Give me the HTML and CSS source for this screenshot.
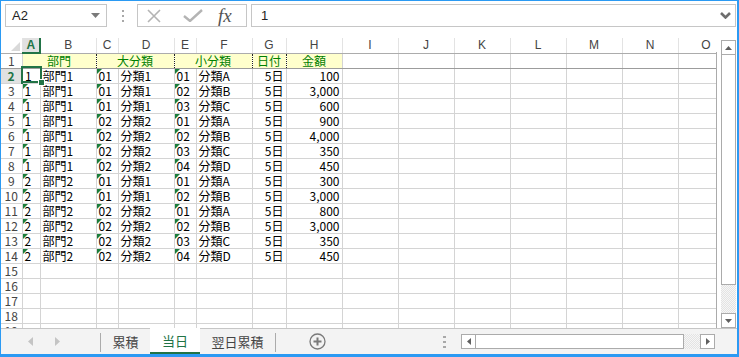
FILE: index.html
```html
<!DOCTYPE html>
<html lang="ja">

<head>
    <meta charset="UTF-8">
    <title>当日</title>
    <link rel="stylesheet" href="styles.css">
</head>

<body>
    <div class="window">
        <div class="formula-bar">
            <div class="name-box">
                <span>A2</span>
                <svg class="caret" width="9" height="5" viewBox="0 0 9 5"><path d="M0 0H9L4.5 5Z" fill="#7a7a7a"/></svg>
            </div>
            <div class="grip">
                <svg width="2" height="12" viewBox="0 0 2 12"><rect y="0" width="2" height="2" fill="#a8a8a8"/><rect y="5" width="2" height="2" fill="#a8a8a8"/><rect y="10" width="2" height="2" fill="#a8a8a8"/></svg>
            </div>
            <div class="fx-buttons">
                <svg class="cancel" width="14" height="14" viewBox="0 0 14 14"><path d="M1 1L13 13M13 1L1 13" stroke="#b4b4b4" stroke-width="1.6" fill="none"/></svg>
                <svg class="enter" width="20" height="13" viewBox="0 0 20 13"><path d="M1 7L7 12L19 1" stroke="#b4b4b4" stroke-width="2.4" fill="none"/></svg>
                <span class="fx">fx</span>
            </div>
            <div class="formula-input">
                <span>1</span>
                <svg class="chevron" width="11" height="7" viewBox="0 0 11 7"><path d="M1 1L5.5 5.5L10 1" stroke="#6e6e6e" stroke-width="2.6" fill="none"/></svg>
            </div>
        </div>

        <div class="sheet-area">
            <div class="sheet">
                <table class="grid">
                    <colgroup>
                        <col style="width:21px"><col style="width:18px"><col style="width:56px"><col style="width:22px">
                        <col style="width:56px"><col style="width:22px"><col style="width:56px"><col style="width:34px">
                        <col style="width:56px"><col style="width:56px"><col style="width:56px"><col style="width:56px">
                        <col style="width:56px"><col style="width:56px"><col style="width:56px"><col style="width:56px">
                    </colgroup>
                    <tr class="cols">
                        <th class="corner"><span></span></th>
                        <th class="on">A</th><th>B</th><th>C</th><th>D</th><th>E</th><th>F</th><th>G</th><th>H</th>
                        <th>I</th><th>J</th><th>K</th><th>L</th><th>M</th><th>N</th><th>O</th>
                    </tr>
                    <tr class="head">
                        <th>1</th>
                        <td colspan="2" class="dot">部門</td><td colspan="2" class="dot">大分類</td>
                        <td colspan="2" class="dot">小分類</td><td class="dot">日付</td><td>金額</td>
                        <td class="blank"></td><td class="blank"></td><td class="blank"></td><td class="blank"></td><td class="blank"></td><td class="blank"></td><td class="blank"></td>
                    </tr>
                    <tr>
                        <th class="on">2</th>
                        <td>1</td><td>部門1</td><td class="t">01</td><td>分類1</td><td class="t">01</td><td>分類A</td><td class="r">5日</td><td class="r">100</td>
                        <td></td><td></td><td></td><td></td><td></td><td></td><td></td>
                    </tr>
                    <tr>
                        <th>3</th>
                        <td class="t">1</td><td>部門1</td><td class="t">01</td><td>分類1</td><td class="t">02</td><td>分類B</td><td class="r">5日</td><td class="r">3,000</td>
                        <td></td><td></td><td></td><td></td><td></td><td></td><td></td>
                    </tr>
                    <tr>
                        <th>4</th>
                        <td class="t">1</td><td>部門1</td><td class="t">01</td><td>分類1</td><td class="t">03</td><td>分類C</td><td class="r">5日</td><td class="r">600</td>
                        <td></td><td></td><td></td><td></td><td></td><td></td><td></td>
                    </tr>
                    <tr>
                        <th>5</th>
                        <td class="t">1</td><td>部門1</td><td class="t">02</td><td>分類2</td><td class="t">01</td><td>分類A</td><td class="r">5日</td><td class="r">900</td>
                        <td></td><td></td><td></td><td></td><td></td><td></td><td></td>
                    </tr>
                    <tr>
                        <th>6</th>
                        <td class="t">1</td><td>部門1</td><td class="t">02</td><td>分類2</td><td class="t">02</td><td>分類B</td><td class="r">5日</td><td class="r">4,000</td>
                        <td></td><td></td><td></td><td></td><td></td><td></td><td></td>
                    </tr>
                    <tr>
                        <th>7</th>
                        <td class="t">1</td><td>部門1</td><td class="t">02</td><td>分類2</td><td class="t">03</td><td>分類C</td><td class="r">5日</td><td class="r">350</td>
                        <td></td><td></td><td></td><td></td><td></td><td></td><td></td>
                    </tr>
                    <tr>
                        <th>8</th>
                        <td class="t">1</td><td>部門1</td><td class="t">02</td><td>分類2</td><td class="t">04</td><td>分類D</td><td class="r">5日</td><td class="r">450</td>
                        <td></td><td></td><td></td><td></td><td></td><td></td><td></td>
                    </tr>
                    <tr>
                        <th>9</th>
                        <td class="t">2</td><td>部門2</td><td class="t">01</td><td>分類1</td><td class="t">01</td><td>分類A</td><td class="r">5日</td><td class="r">300</td>
                        <td></td><td></td><td></td><td></td><td></td><td></td><td></td>
                    </tr>
                    <tr>
                        <th>10</th>
                        <td class="t">2</td><td>部門2</td><td class="t">01</td><td>分類1</td><td class="t">02</td><td>分類B</td><td class="r">5日</td><td class="r">3,000</td>
                        <td></td><td></td><td></td><td></td><td></td><td></td><td></td>
                    </tr>
                    <tr>
                        <th>11</th>
                        <td class="t">2</td><td>部門2</td><td class="t">02</td><td>分類2</td><td class="t">01</td><td>分類A</td><td class="r">5日</td><td class="r">800</td>
                        <td></td><td></td><td></td><td></td><td></td><td></td><td></td>
                    </tr>
                    <tr>
                        <th>12</th>
                        <td class="t">2</td><td>部門2</td><td class="t">02</td><td>分類2</td><td class="t">02</td><td>分類B</td><td class="r">5日</td><td class="r">3,000</td>
                        <td></td><td></td><td></td><td></td><td></td><td></td><td></td>
                    </tr>
                    <tr>
                        <th>13</th>
                        <td class="t">2</td><td>部門2</td><td class="t">02</td><td>分類2</td><td class="t">03</td><td>分類C</td><td class="r">5日</td><td class="r">350</td>
                        <td></td><td></td><td></td><td></td><td></td><td></td><td></td>
                    </tr>
                    <tr>
                        <th>14</th>
                        <td class="t">2</td><td>部門2</td><td class="t">02</td><td>分類2</td><td class="t">04</td><td>分類D</td><td class="r">5日</td><td class="r">450</td>
                        <td></td><td></td><td></td><td></td><td></td><td></td><td></td>
                    </tr>
                    <tr>
                        <th>15</th>
                        <td></td><td></td><td></td><td></td><td></td><td></td><td></td><td></td>
                        <td></td><td></td><td></td><td></td><td></td><td></td><td></td>
                    </tr>
                    <tr>
                        <th>16</th>
                        <td></td><td></td><td></td><td></td><td></td><td></td><td></td><td></td>
                        <td></td><td></td><td></td><td></td><td></td><td></td><td></td>
                    </tr>
                    <tr>
                        <th>17</th>
                        <td></td><td></td><td></td><td></td><td></td><td></td><td></td><td></td>
                        <td></td><td></td><td></td><td></td><td></td><td></td><td></td>
                    </tr>
                    <tr>
                        <th>18</th>
                        <td></td><td></td><td></td><td></td><td></td><td></td><td></td><td></td>
                        <td></td><td></td><td></td><td></td><td></td><td></td><td></td>
                    </tr>
                    <tr>
                        <th>19</th>
                        <td></td><td></td><td></td><td></td><td></td><td></td><td></td><td></td>
                        <td></td><td></td><td></td><td></td><td></td><td></td><td></td>
                    </tr>
                </table>
                <div class="selection"><span class="handle"></span></div>
            </div>

            <div class="vscroll">
                <div class="sb-btn"><svg width="7" height="4" viewBox="0 0 7 4"><path d="M0 4H7L3.5 0Z" fill="#5f5f5f"/></svg></div>
                <div class="sb-thumb v"></div>
                <div class="sb-track"></div>
                <div class="sb-btn"><svg width="7" height="4" viewBox="0 0 7 4"><path d="M0 0H7L3.5 4Z" fill="#5f5f5f"/></svg></div>
            </div>
        </div>

        <div class="tab-bar">
            <div class="tab-nav">
                <svg width="5" height="9" viewBox="0 0 5 9"><path d="M5 0V9L0 4.5Z" fill="#c4c4c4"/></svg>
                <svg width="5" height="9" viewBox="0 0 5 9"><path d="M0 0V9L5 4.5Z" fill="#c4c4c4"/></svg>
            </div>
            <span class="sep"></span>
            <div class="tab">累積</div>
            <div class="tab active">当日</div>
            <div class="tab wide">翌日累積</div>
            <span class="sep"></span>
            <div class="tab-rest">
                <svg class="add" width="17" height="17" viewBox="0 0 17 17"><circle cx="8.5" cy="8.5" r="7.5" stroke="#7a7a7a" stroke-width="1.3" fill="none"/><path d="M8.5 4.5V12.5M4.5 8.5H12.5" stroke="#7a7a7a" stroke-width="2"/></svg>
                <svg class="dots" width="3" height="12" viewBox="0 0 3 12"><rect y="0" width="3" height="2" fill="#a8a8a8"/><rect y="5" width="3" height="2" fill="#a8a8a8"/><rect y="10" width="3" height="2" fill="#a8a8a8"/></svg>
                <div class="hscroll">
                    <div class="sb-btn"><svg width="4" height="7" viewBox="0 0 4 7"><path d="M4 0V7L0 3.5Z" fill="#5f5f5f"/></svg></div>
                    <div class="sb-thumb h"></div>
                    <div class="sb-track"></div>
                    <div class="sb-btn"><svg width="4" height="7" viewBox="0 0 4 7"><path d="M0 0V7L4 3.5Z" fill="#5f5f5f"/></svg></div>
                </div>
            </div>
        </div>
    </div>
</body>

</html>
```

FILE: styles.css
```css
body {
    margin: 0;
    font-family: "Noto Sans CJK JP", "Noto Sans", sans-serif;
    background: #fff;
}

.window {
    width: 739px;
    height: 357px;
    box-sizing: border-box;
    border: 1px solid #2b9af3;
    border-width: 1px 2px 3px 1px;
    display: flex;
    flex-direction: column;
    overflow: hidden;
}

/* formula bar */

.formula-bar {
    flex: none;
    height: 37px;
    box-sizing: border-box;
    padding: 3px 1px 0 4px;
    display: flex;
    align-items: flex-start;
}

.name-box,
.fx-buttons,
.formula-input {
    height: 23px;
    box-sizing: border-box;
    border: 1px solid #c6c6c6;
    display: flex;
    align-items: center;
}

.name-box {
    width: 102px;
    padding: 0 6px 0 6px;
    justify-content: space-between;
    font-family: "Liberation Sans", sans-serif;
    font-size: 13px;
    color: #222;
}

.grip {
    width: 30px;
    height: 23px;
    display: flex;
    align-items: center;
    padding-left: 15px;
    box-sizing: border-box;
}

.fx-buttons {
    width: 110px;
    padding-left: 9px;
}

.fx-buttons .enter {
    margin-left: 22px;
}

.fx {
    margin-left: 15px;
    font-family: "Liberation Serif", serif;
    font-style: italic;
    font-size: 19px;
    color: #545454;
    line-height: 20px;
}

.formula-input {
    flex: 1;
    margin-left: 4px;
    padding: 0 4px 0 9px;
    justify-content: space-between;
    font-family: "Liberation Sans", sans-serif;
    font-size: 13px;
    color: #222;
}

/* sheet */

.sheet-area {
    flex: none;
    height: 290px;
    display: flex;
}

.sheet {
    position: relative;
    width: 716px;
    overflow: hidden;
}

.sheet::after {
    content: "";
    position: absolute;
    right: 0;
    top: 14px;
    bottom: 0;
    border-right: 1px solid #ababab;
}

.grid {
    table-layout: fixed;
    width: 733px;
    border-collapse: collapse;
    font-size: 12px;
    color: #000;
}

.grid td,
.grid th {
    height: 14px;
    padding: 0 2px;
    line-height: 14px;
    border-right: 1px solid #d4d4d4;
    border-bottom: 1px solid #d4d4d4;
    white-space: nowrap;
    overflow: hidden;
    font-weight: normal;
}

.grid th {
    color: #444;
    text-align: center;
    padding: 0;
}

.grid td {
    position: relative;
    text-align: left;
}

.grid .cols th {
    height: 13px;
    font-family: "Liberation Sans", sans-serif;
    font-size: 12px;
    border-right-color: #e3e3e3;
    border-bottom-color: #acacac;
}

.grid .cols th.on {
    background: #e1e1e1;
    color: #217346;
    font-weight: bold;
    border-bottom: 2px solid #217346;
}

.grid th.on {
    background: #e1e1e1;
    color: #217346;
    font-weight: bold;
    border-right: 2px solid #217346;
}

.corner {
    position: relative;
}

.corner span {
    position: absolute;
    right: 2px;
    bottom: 2px;
    border-left: 9px solid transparent;
    border-bottom: 9px solid #d9d9d9;
}

.grid .head td,
.grid .head th {
    border-bottom-color: #9c9c9c;
}

.grid .head td {
    background: #ffffcc;
    color: #008000;
    text-align: center;
}

.grid .head td.blank {
    background: #fff;
}

.grid .head td.dot {
    border-right: 1px dotted #222;
}

.grid td.r {
    text-align: right;
}

.grid td.t::before {
    content: "";
    position: absolute;
    left: 0;
    top: 0;
    border-top: 5px solid #1b7d3a;
    border-right: 5px solid transparent;
}

.selection {
    position: absolute;
    left: 20px;
    top: 28px;
    width: 17px;
    height: 13px;
    border: 2px solid #217346;
}

.handle {
    position: absolute;
    right: -5px;
    bottom: -5px;
    width: 5px;
    height: 5px;
    background: #217346;
    border: 1px solid #fff;
}

/* scrollbars */

.vscroll {
    width: 15px;
    margin: 2px 0 0 4px;
    display: flex;
    flex-direction: column;
}

.sb-btn {
    box-sizing: border-box;
    border: 1px solid #ababab;
    background: #fff;
    display: flex;
    align-items: center;
    justify-content: center;
}

.vscroll .sb-btn {
    height: 15px;
}

.sb-thumb {
    box-sizing: border-box;
    border: 1px solid #ababab;
    background: #fff;
}

.sb-thumb.v {
    height: 230px;
    border-top: none;
}

.sb-track {
    flex: 1;
    background: repeating-conic-gradient(#e3e3e3 0 25%, #f6f6f6 0 50%) 0 0 / 2px 2px;
}

.hscroll {
    width: 254px;
    height: 15px;
    margin-left: 15px;
    display: flex;
}

.hscroll .sb-btn {
    width: 15px;
}

.sb-thumb.h {
    width: 208px;
    border-left: none;
}

/* sheet tabs */

.tab-bar {
    flex: none;
    height: 26px;
    box-sizing: border-box;
    border-top: 1px solid #c6c6c6;
    display: flex;
    background: #f3f3f3;
    font-size: 13px;
    color: #444;
}

.tab-nav {
    width: 99px;
    padding-left: 27px;
    box-sizing: border-box;
    display: flex;
    align-items: center;
    gap: 22px;
}

.sep {
    width: 1px;
    height: 19px;
    margin-top: 4px;
    background: #ababab;
}

.tab {
    width: 49px;
    text-align: center;
    line-height: 25px;
}

.tab.active {
    width: 50px;
    height: 26px;
    margin-top: -1px;
    box-sizing: border-box;
    background: #fff;
    border-bottom: 2px solid #217346;
    line-height: 25px;
    color: #217346;
}

.tab.wide {
    width: 75px;
}

.tab-rest {
    flex: 1;
    display: flex;
    align-items: center;
    padding-left: 33px;
}

.tab-rest .dots {
    margin-left: 117px;
}
```
